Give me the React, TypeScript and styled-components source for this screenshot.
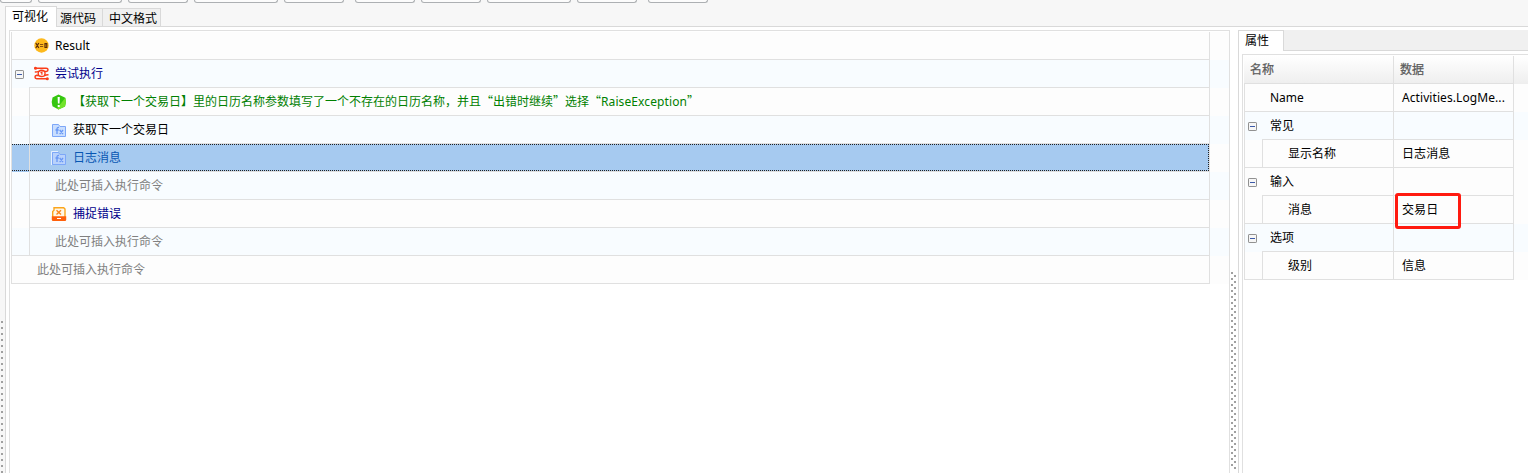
import React from 'react';
import styled, { createGlobalStyle, css } from 'styled-components';

const LINE = '#e0e0e0';
const EVEN = '#fdfdfd';
const ODD = '#f8fcff';

const Global = createGlobalStyle`
  * { box-sizing: border-box; }
  body {
    margin: 0;
    overflow: hidden;
    background: #f7f7f7;
    color: #000;
    font: 12px/16px 'Noto Sans', 'Noto Sans CJK SC', sans-serif;
  }
`;

const Window = styled.div`
  width: 1528px;
  height: 473px;
  display: flex;
  flex-direction: column;
  overflow: hidden;
`;

const Toolbar = styled.div`
  height: 6px;
  flex: none;
  display: flex;
  align-items: flex-start;
`;

const ToolButton = styled.div<{ $w: number; $gap: number }>`
  width: ${p => p.$w}px;
  height: 3px;
  margin-left: ${p => p.$gap}px;
  border: 1px solid #adb0b3;
  border-top: 0;
  border-radius: 0 0 3px 3px;
  background: #fcfcfc;
`;

const Body = styled.div`
  flex: 1;
  display: flex;
  min-height: 0;
`;

const LeftEdge = styled.div`
  width: 5px;
  flex: none;
  padding: 315px 0 0 1px;
`;

const Dots = styled.div<{ $count: number }>`
  width: 2px;
  height: ${p => p.$count * 6}px;
  background: repeating-linear-gradient(#a0a0a0 0 2px, transparent 2px 6px);
`;

const Main = styled.div`
  flex: 1;
  display: flex;
  flex-direction: column;
  min-width: 0;
`;

const TabStrip = styled.div`
  height: 21px;
  flex: none;
  display: flex;
  align-items: flex-end;
  border-bottom: 1px solid #d9d9d9;
`;

const Tab = styled.div<{ $w: number; $active?: boolean }>`
  width: ${p => p.$w}px;
  height: 18px;
  padding: 2px 0 0 3px;
  border: 1px solid #d9d9d9;
  border-width: 1px 1px 0 0;
  background: #f0f0f0;
  white-space: nowrap;
  ${p => p.$active && css`
    height: 21px;
    margin-bottom: -1px;
    padding: 2px 0 0 6px;
    border-left-width: 1px;
    background: #fff;
  `}
`;

const Workspace = styled.div`
  flex: 1;
  display: flex;
  min-height: 0;
  padding: 3px 0 0 3px;
  border-left: 1px solid #d9d9d9;
  background: #fff;
`;

const TreeFrame = styled.div`
  width: 1221px;
  flex: none;
  padding: 1px 0 0 1px;
  border: 1px solid ${LINE};
  border-bottom: 0;
`;

const Row = styled.div<{ $odd?: boolean }>`
  height: 28px;
  display: flex;
  background: ${p => (p.$odd ? ODD : EVEN)};
`;

const RowBody = styled.div<{ $selected?: boolean }>`
  width: 1199px;
  position: relative;
  display: flex;
  border: 1px solid ${LINE};
  border-width: 0 1px 0 1px;
  ${p => p.$selected && css`
    background: #a6caf0;
    color: #0857b3;
    &::after {
      content: '';
      position: absolute;
      inset: 0 0 1px 0;
      border: 1px dotted #222;
      border-left: 0;
    }
  `}
`;

const Gutter = styled.div<{ $w: number; $line?: boolean }>`
  width: ${p => p.$w}px;
  flex: none;
  display: flex;
  align-items: center;
  padding: 1px 0 0 3px;
  border-bottom: ${p => (p.$line ? `1px solid ${LINE}` : '0')};
`;

const Content = styled.div<{ $nested?: boolean; $pad: number }>`
  flex: 1;
  min-width: 0;
  display: flex;
  align-items: center;
  gap: 6px;
  padding-left: ${p => p.$pad}px;
  border-bottom: 1px solid ${LINE};
  border-left: ${p => (p.$nested ? `1px solid ${LINE}` : '0')};
`;

const Label = styled.span<{ $color?: string; $track?: number }>`
  color: ${p => p.$color ?? 'inherit'};
  letter-spacing: ${p => p.$track ?? 0}px;
  white-space: pre;
`;

const Cjk = styled.span`
  font-family: 'Noto Sans CJK SC', sans-serif;
  letter-spacing: 0;
`;

const Splitter = styled.div`
  width: 8px;
  flex: none;
  display: flex;
  gap: 1px;
  padding: 242px 0 0 1px;
`;

const LowDots = styled(Dots)`
  margin-top: 3px;
`;

const Panel = styled.div`
  flex: 1;
  min-width: 0;
  display: flex;
  flex-direction: column;
  border-left: 1px solid #d9d9d9;
`;

const PanelTabs = styled.div`
  height: 21px;
  flex: none;
  background: #f0f0f0;
  border-bottom: 1px solid #d9d9d9;
`;

const PanelTab = styled.div`
  width: 45px;
  height: 21px;
  padding: 2px 0 0 6px;
  border: 1px solid #d9d9d9;
  border-width: 1px 1px 0 0;
  background: #fff;
  white-space: nowrap;
`;

const PropFrame = styled.div`
  flex: 1;
  margin: 3px 0 0 3px;
  padding: 1px 0 0 1px;
  border: 1px solid ${LINE};
  border-width: 1px 0 0 1px;
`;

const HeadRow = styled.div`
  height: 28px;
  display: flex;
  color: #5b5b5b;
  -webkit-text-stroke: 0.25px #5b5b5b;
  background: linear-gradient(#fff, #eeeeee);
`;

const HeadCell = styled.div<{ $w: number; $pad: number }>`
  width: ${p => p.$w}px;
  padding: 6px 0 0 ${p => p.$pad}px;
  border: 1px solid ${LINE};
  border-width: 0 1px 1px 0;
`;

const NameCell = styled.div`
  width: 150px;
  flex: none;
  display: flex;
  border: 1px solid ${LINE};
  border-width: 0 1px;
`;

const ValueCell = styled.div`
  width: 120px;
  flex: none;
  position: relative;
  display: flex;
  align-items: center;
  padding-left: 8px;
  border: 1px solid ${LINE};
  border-width: 0 1px 1px 0;
`;

const Highlight = styled.div`
  position: absolute;
  left: 1px;
  top: -3px;
  width: 66px;
  height: 36px;
  border: 3px solid #ff1a10;
  border-radius: 3px;
  z-index: 1;
`;

const Toggle = () => (
  <svg width="9" height="9" viewBox="0 0 9 9">
    <rect x=".5" y=".5" width="8" height="8" rx=".6" fill="#f6f6f6" stroke="#919191" />
    <path d="M2 4.5h5" stroke="#3c5aa8" />
  </svg>
);

const VariableIcon = () => (
  <svg width="15" height="15" viewBox="0 0 15 15">
    <circle cx="7.5" cy="7.5" r="7.2" fill="#fdb91d" />
    <path d="M1.800 5l3 5M4.800 5l-3 5M11 5.600h1.800v3.900H11z" fill="none" stroke="#5a2a0c" strokeWidth="1.2" />
    <path d="M6 6.500h3.200M6 8.500h3.200" stroke="#8a4f10" />
  </svg>
);

const TryIcon = () => (
  <svg width="15" height="15" viewBox="0 0 15 15" fill="none" stroke="#fa3c19" strokeWidth="1.5">
    <path d="M1.500 2.200H12.200Q14 2.200 14 3.800T12.200 5.500L10.800 5.400Q7.500 3.400 4.800 5.300Q4 6 .8 6" />
    <path d="M14.500 8.700Q11.500 8.700 10.300 9.800Q7.500 11.300 4.600 9.600L2.800 9.300Q1 9.500 1 11T2.800 12.700H13.500" />
    <path d="M4.700 5.500Q3.600 7.600 4.800 9.600M10.700 5.400Q11.600 7.500 10.400 9.700" strokeWidth="1.300" />
    <path d="M6.500 6.800l1.400-.7v2.700" strokeWidth="1.200" />
    <circle cx="1.500" cy="2.200" r=".8" />
    <circle cx="13.300" cy="12.700" r=".8" />
  </svg>
);

const CommentIcon = () => (
  <svg width="16" height="16" viewBox="0 0 16 16">
    <path d="M7.500 .6L14.300 3.800L15 8l-1 4.400-6.500 3-6-3.200L.7 8l.8-4.400z" fill="#35c60f" />
    <path d="M14.300 3.800L15 8l-1 4.400-6.500 3-1.500-.8z" fill="#72e32a" />
    <path d="M6.600 3h2.200l-.3 6.500H6.900zM6.700 11h2v2h-2z" fill="#fff" />
  </svg>
);

const FunctionIcon = ({ light }: { light?: boolean }) => (
  <svg width="16" height="16" viewBox="0 0 16 16">
    <path d="M1.500 2.500h6l1.500 2h5.500v10h-13z" fill={light ? '#b9d2fb' : '#c9defe'} stroke="#7da7f8" />
    {light && <path d="M.5 15V1.500H7" fill="none" stroke="#e5f0ff" />}
    <path d="M8 5.500q-2-.4-2 1.500V12M4.500 8h3.200M8.700 8l3.300 4.200M12 8L8.700 12.200" fill="none" stroke="#6797f5" strokeWidth="1.300" />
  </svg>
);

const CatchIcon = () => (
  <svg width="16" height="16" viewBox="0 0 16 16">
    <path d="M1.700 11V5.500L3 4.200V1.700h9.700L14 3v8" fill="#fff7e6" stroke="#fba51b" strokeWidth="1.400" />
    <path d="M5.500 4.200l4.500 4.300M10 4.200L5.500 8.500" stroke="#fb861b" strokeWidth="1.400" />
    <path d="M.8 10.200h14.400v3.600q0 1.200-1.200 1.200H2q-1.200 0-1.200-1.200z" fill="#ff600b" />
    <path d="M6 12.500h4" stroke="#fff" />
  </svg>
);

const buttons = [[32, 0], [84, 6], [60, 6], [84, 6], [60, 6], [60, 11], [60, 6], [84, 6], [60, 6], [60, 11]];

type TreeRowProps = {
  odd?: boolean;
  nested?: boolean;
  selected?: boolean;
  closes?: boolean;
  toggle?: boolean;
  pad: number;
  children: React.ReactNode;
};

const TreeRow = ({ odd, nested, selected, closes, toggle, pad, children }: TreeRowProps) => (
  <Row $odd={odd}>
    <RowBody $selected={selected}>
      <Gutter $w={17} $line={closes}>{toggle && <Toggle />}</Gutter>
      <Content $nested={nested} $pad={pad}>{children}</Content>
    </RowBody>
  </Row>
);

type PropRowProps = {
  name: string;
  value?: string;
  kind: 'plain' | 'group' | 'item';
  odd?: boolean;
  marked?: boolean;
};

const PropRow = ({ name, value, kind, odd, marked }: PropRowProps) => (
  <Row $odd={odd}>
    <NameCell>
      <Gutter $w={17} $line={kind !== 'group'}>{kind === 'group' && <Toggle />}</Gutter>
      <Content $nested={kind === 'item'} $pad={kind === 'item' ? 25 : 8}>
        <Label>{name}</Label>
      </Content>
    </NameCell>
    <ValueCell>
      <Label $track={0.08}>{value}</Label>
      {marked && <Highlight />}
    </ValueCell>
  </Row>
);

const NAVY = '#00008b';
const HINT = '#808080';

export default function App() {
  return (
    <>
      <Global />
      <Window lang="zh-CN">
        <Toolbar>
          {buttons.map(([w, gap], i) => <ToolButton key={i} $w={w} $gap={gap} />)}
        </Toolbar>
        <Body>
          <LeftEdge><Dots $count={26} /></LeftEdge>
          <Main>
            <TabStrip>
              <Tab $w={52} $active>可视化</Tab>
              <Tab $w={46}>源代码</Tab>
              <Tab $w={58}><Label> 中文格式</Label></Tab>
            </TabStrip>
            <Workspace>
              <TreeFrame>
                <TreeRow closes pad={5}><VariableIcon /><Label>Result</Label></TreeRow>
                <TreeRow odd toggle pad={5}><TryIcon /><Label $color={NAVY}>尝试执行</Label></TreeRow>
                <TreeRow nested pad={21}>
                  <CommentIcon />
                  <Label $color="#008000" $track={0.1}>
                    <Cjk>【获取下一个交易日】里的日历名称参数填写了一个不存在的日历名称，并且“出错时继续”选择“</Cjk>
                    RaiseException
                    <Cjk>”</Cjk>
                  </Label>
                </TreeRow>
                <TreeRow odd nested pad={21}><FunctionIcon /><Label>获取下一个交易日</Label></TreeRow>
                <TreeRow nested selected pad={21}><FunctionIcon light /><Label>日志消息</Label></TreeRow>
                <TreeRow odd nested pad={25}><Label $color={HINT}>此处可插入执行命令</Label></TreeRow>
                <TreeRow nested pad={21}><CatchIcon /><Label $color={NAVY}>捕捉错误</Label></TreeRow>
                <TreeRow odd nested closes pad={25}><Label $color={HINT}>此处可插入执行命令</Label></TreeRow>
                <TreeRow closes pad={8}><Label $color={HINT}>此处可插入执行命令</Label></TreeRow>
              </TreeFrame>
              <Splitter>
                <Dots $count={33} />
                <LowDots $count={33} />
              </Splitter>
              <Panel>
                <PanelTabs><PanelTab>属性</PanelTab></PanelTabs>
                <PropFrame>
                  <HeadRow>
                    <HeadCell $w={150} $pad={6}>名称</HeadCell>
                    <HeadCell $w={120} $pad={6}>数据</HeadCell>
                  </HeadRow>
                  <PropRow kind="plain" name="Name" value="Activities.LogMe..." />
                  <PropRow kind="group" odd name="常见" />
                  <PropRow kind="item" name="显示名称" value="日志消息" />
                  <PropRow kind="group" name="输入" />
                  <PropRow kind="item" name="消息" value="交易日" marked />
                  <PropRow kind="group" odd name="选项" />
                  <PropRow kind="item" name="级别" value="信息" />
                </PropFrame>
              </Panel>
            </Workspace>
          </Main>
        </Body>
      </Window>
    </>
  );
}
